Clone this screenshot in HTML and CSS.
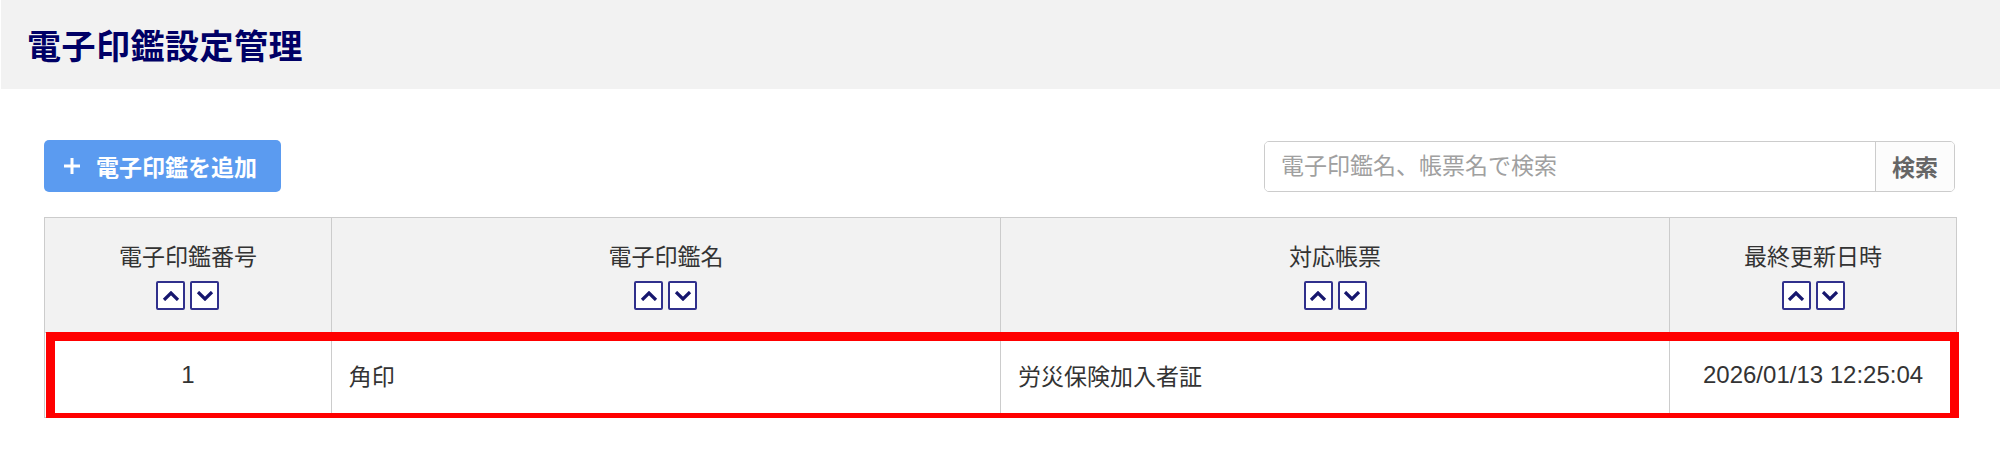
FILE: index.html
```html
<!DOCTYPE html>
<html>
    <head>
        <title>電子印鑑設定管理</title>
        <link rel="stylesheet" href="styles.css">
    </head>
    <body>
      <div class="pageHeader">
        <h1>電子印鑑設定管理</h1>
      </div>
      <div class="content">
        <div class="toolbar">
          <span class="addButton">
            <svg class="plusIcon" width="16" height="16" viewBox="0 0 16 16"><path d="M8 0v16M0 8h16" stroke="#fff" stroke-width="3"/></svg>
            電子印鑑を追加
          </span>
          <div class="searchBox">
            <input type="text" class="searchInput" placeholder="電子印鑑名、帳票名で検索">
            <span class="searchButton">検索</span>
          </div>
        </div>
        <div class="tableWrap">
          <table class="stampTable">
            <colgroup>
              <col class="colNarrow">
              <col class="colWide">
              <col class="colWide">
              <col class="colNarrow">
            </colgroup>
            <thead>
              <tr>
                <th>
                  <div class="thLabel">電子印鑑番号</div>
                  <div class="sortButtons">
                    <span class="sortBtn"><svg width="18" height="10" viewBox="0 0 18 10"><path d="M2 9L9 2l7 7" fill="none" stroke="#16166e" stroke-width="3.2"/></svg></span>
                    <span class="sortBtn"><svg width="18" height="10" viewBox="0 0 18 10"><path d="M2 1l7 7 7-7" fill="none" stroke="#16166e" stroke-width="3.2"/></svg></span>
                  </div>
                </th>
                <th>
                  <div class="thLabel">電子印鑑名</div>
                  <div class="sortButtons">
                    <span class="sortBtn"><svg width="18" height="10" viewBox="0 0 18 10"><path d="M2 9L9 2l7 7" fill="none" stroke="#16166e" stroke-width="3.2"/></svg></span>
                    <span class="sortBtn"><svg width="18" height="10" viewBox="0 0 18 10"><path d="M2 1l7 7 7-7" fill="none" stroke="#16166e" stroke-width="3.2"/></svg></span>
                  </div>
                </th>
                <th>
                  <div class="thLabel">対応帳票</div>
                  <div class="sortButtons">
                    <span class="sortBtn"><svg width="18" height="10" viewBox="0 0 18 10"><path d="M2 9L9 2l7 7" fill="none" stroke="#16166e" stroke-width="3.2"/></svg></span>
                    <span class="sortBtn"><svg width="18" height="10" viewBox="0 0 18 10"><path d="M2 1l7 7 7-7" fill="none" stroke="#16166e" stroke-width="3.2"/></svg></span>
                  </div>
                </th>
                <th>
                  <div class="thLabel">最終更新日時</div>
                  <div class="sortButtons">
                    <span class="sortBtn"><svg width="18" height="10" viewBox="0 0 18 10"><path d="M2 9L9 2l7 7" fill="none" stroke="#16166e" stroke-width="3.2"/></svg></span>
                    <span class="sortBtn"><svg width="18" height="10" viewBox="0 0 18 10"><path d="M2 1l7 7 7-7" fill="none" stroke="#16166e" stroke-width="3.2"/></svg></span>
                  </div>
                </th>
              </tr>
            </thead>
            <tbody>
              <tr>
                <td class="center num">1</td>
                <td>角印</td>
                <td>労災保険加入者証</td>
                <td class="center num">2026/01/13 12:25:04</td>
              </tr>
            </tbody>
          </table>
          <!-- highlight frame drawn over the selected row -->
          <div class="rowHighlight"></div>
        </div>
      </div>
    </body>
</html>
```
FILE: styles.css
```css
* {
  box-sizing: border-box;
}

body {
  margin: 0;
  background: #fff;
  font-family: "Liberation Sans", "Noto Sans CJK JP", sans-serif;
  color: #333;
}

/* Page title band */
.pageHeader {
  background-color: #f2f2f2;
  height: 89px;
  margin-left: 1px;
  padding-left: 26px;
  display: flex;
  align-items: center;
}

.pageHeader h1 {
  margin: 0;
  font-size: 34px;
  font-weight: bold;
  color: #000066;
  letter-spacing: 0.5px;
}

.content {
  padding: 51px 43px 0 44px;
}

/* Add button + search */
.toolbar {
  display: flex;
  justify-content: space-between;
  align-items: center;
  height: 52px;
}

.addButton {
  display: flex;
  align-items: center;
  width: 237px;
  height: 52px;
  padding-left: 20px;
  background-color: #5b9bf0;
  border-radius: 5px;
  color: #fff;
  font-size: 23px;
  font-weight: bold;
  cursor: pointer;
}

.plusIcon {
  margin-right: 16px;
}

.searchBox {
  display: flex;
  width: 691px;
  height: 51px;
  margin-right: 2px;
  border: 1px solid #cccccc;
  border-radius: 5px;
  overflow: hidden;
}

.searchInput {
  flex: 1;
  border: none;
  padding: 0 16px;
  font-size: 23px;
  font-family: "Liberation Sans", "Noto Sans CJK JP", sans-serif;
  color: #333;
  outline: none;
}

.searchInput::placeholder {
  color: #a0a0a0;
}

.searchButton {
  width: 79px;
  display: flex;
  align-items: center;
  justify-content: center;
  border-left: 1px solid #cccccc;
  background: #fcfcfc;
  color: #666;
  font-size: 23px;
  font-weight: bold;
}

/* Table */
.tableWrap {
  position: relative;
  margin-top: 25px;
}

.stampTable {
  width: 100%;
  border-collapse: collapse;
  table-layout: fixed;
  font-size: 23px;
}

.colNarrow {
  width: 15%;
}

.colWide {
  width: 35%;
}

.stampTable th,
.stampTable td {
  border: 1px solid #cccccc;
}

.stampTable th {
  background: #f2f2f2;
  height: 115px;
  font-weight: normal;
  color: #333;
  padding: 2px 0 0 0;
  vertical-align: middle;
}

.thLabel {
  line-height: 30px;
  margin-bottom: 9px;
}

.sortButtons {
  display: flex;
  justify-content: center;
  gap: 5px;
}

.sortBtn {
  width: 29px;
  height: 29px;
  border: 2px solid #30308c;
  border-radius: 2px;
  background: #fff;
  display: flex;
  align-items: center;
  justify-content: center;
  cursor: pointer;
}

.stampTable td {
  height: 85px;
  padding: 0 17px;
  color: #333;
}

.stampTable td.center {
  text-align: center;
}

.stampTable td.num {
  font-size: 24px;
}

.rowHighlight {
  position: absolute;
  left: 2px;
  top: 115px;
  width: 1913px;
  height: 90px;
  border: 9px solid #ff0000;
  pointer-events: none;
}
```
